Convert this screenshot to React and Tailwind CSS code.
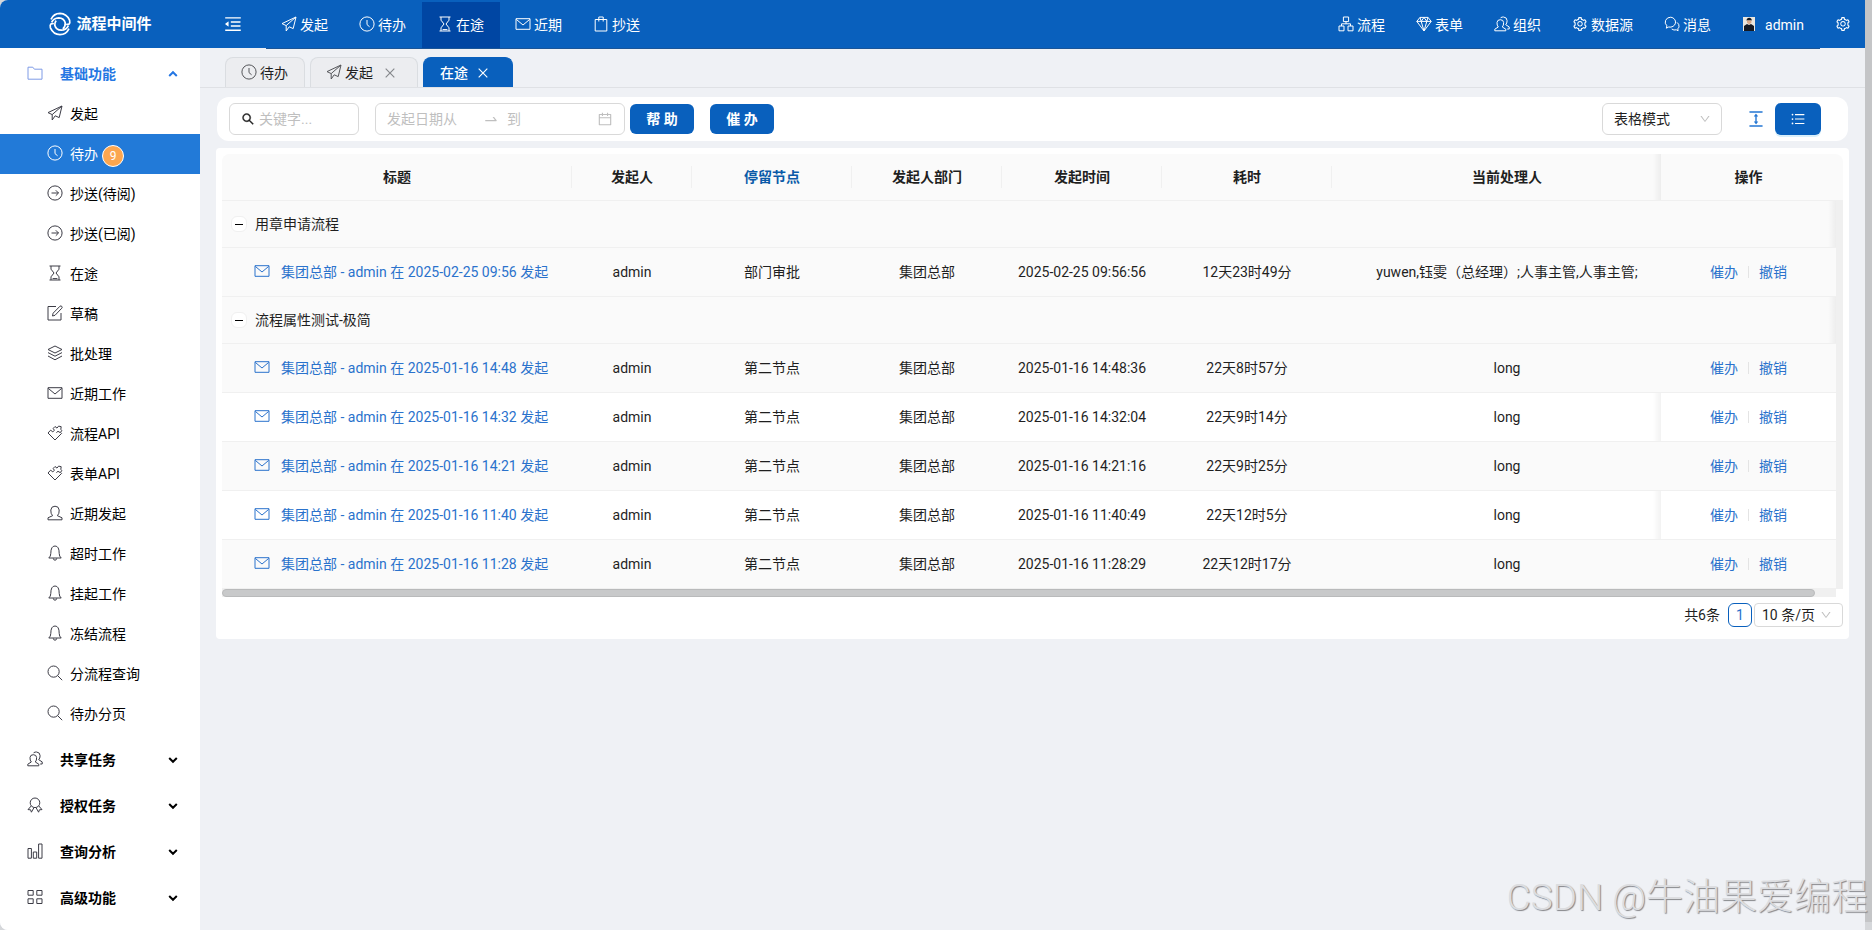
import React, { useState } from "react";
import clsx from "clsx";
import {
  AiOutlineCalendar,
  AiOutlineClose,
  AiOutlineColumnHeight,
  AiOutlineDown,
  AiOutlineMenuFold,
  AiOutlineSearch,
  AiOutlineSetting,
  AiOutlineSwapRight,
  AiOutlineUnorderedList,
} from "react-icons/ai";

// thin 16px line icons, one path each
const paths = {
  send: "M15 1 1 7.6l4.2 2L15 1l-2.8 11.6-4-1.8M5.2 9.6V15l3-4.2",
  clock: "M8 .9a7.1 7.1 0 1 0 0 14.2A7.1 7.1 0 0 0 8 .9M8 4v4.6l2.6 2.2",
  arrow: "M8 .9a7.1 7.1 0 1 0 0 14.2A7.1 7.1 0 0 0 8 .9M4.5 8h7M8.8 5.3 11.5 8l-2.7 2.7",
  hourglass: "M2.5 1h11M2.5 15h11M4 1v3.2L7 8l-3 3.8V15M12 1v3.2L9 8l3 3.8V15M5.6 13.6h4.8",
  edit: "M9 1.5H1v13.5h13V8M5.5 11l.6-2.8L13 1.2q1-.7 1.8.2t0 1.8L8 10.3z",
  layers: "M8 1 15 4.5 8 8 1 4.5zM1 7.6l7 3.6 7-3.6M1 11l7 3.8 7-3.8",
  mail: "M1 2.7h14v10.6H1zM1.3 3.4 8 9l6.7-5.6",
  clip: "M2.2 3.5h11.6V15H2.2zM5.8 5.5V1h4.4v4.5",
  api: "M3.6 5.2 1 8l7 7 6.6-6.6-1-1M3.6 5.2l2.2 1.6 1.6-1.4-1.2-2L8 1.5l2 1.6 1.6-2 2.6.6-.4 2.6 1.2 1.4-2 1.8-2-1.2L9.4 7.6",
  user: "M1 14.8v-2l4.6-2.1Q3.6 8.8 3.8 5 4.2 1.2 8 1.2T12.2 5q.2 3.8-1.8 5.7l4.6 2.1v2z",
  users:
    "M.8 14.8v-1.6L4.3 11Q2.8 9.4 3 6.5q.2-2.8 3.3-2.8t3.3 2.8Q9.8 9.4 8.3 11l3.5 2.2v1.6zM6.6 1.8Q8 .8 9.6 1q3.4.3 3.5 3.7 0 2.6-1.4 4l3.5 2.2V13h-2",
  bell: "M1.8 13h12.4q-2-1.6-2-4.6 0-7.4-4.2-7.4T3.8 8.4q0 3-2 4.6M6.3 13.4q.2 1.8 1.7 1.8t1.7-1.8",
  search: "M6.6 1a5.6 5.6 0 1 0 0 11.2A5.6 5.6 0 0 0 6.6 1M10.7 10.7 15.2 15.2",
  folder: "M1 2.2h4.8l1.6 2H15v10H1z",
  award: "M8 1a4.8 4.8 0 1 0 0 9.6A4.8 4.8 0 0 0 8 1M4.2 9 1 12.6l2.6.2.8 2.4L7 10.6M11.8 9l3.2 3.6-2.6.2-.8 2.4L9 10.6",
  chart: "M1 5.5h3.4v9.7H1zM6.3 9h3.4v6.2H6.3zM11.6 1H15v14.2h-3.4z",
  grid: "M1 1.5h5.2v4.7H1zM9.8 1.5H15v4.7H9.8zM1 9.8h5.2v4.7H1zM9.8 9.8H15v4.7H9.8z",
  flow: "M5.4 1h5.2v4.6H5.4zM1 10h5v4.8H1zM10 10h5v4.8h-5zM8 5.6v2.2M3.5 10V7.8h9V10",
  diamond: "M4 1.4h8l3.2 4L8 15 .8 5.4zM.8 5.4h14.4M4 1.4l1.2 4L8 15l2.8-9.6 1.2-4M5.2 5.4 8 1.4l2.8 4",
  chat: "M6.8 1.2a5.5 5 0 0 0-3.9 8.6l-.6 2.4 2.4-1.2A5.5 5 0 1 0 6.8 1.2M13 6.4q2.4 1.6 2 4.4-.3 1.2-1.2 2l.3 2-1.8-1q-2.4.8-4.6-.8",
};

function Icon({ name, className }) {
  return (
    <svg
      viewBox="1 1 14 14"
      className={clsx("mb-0.5 size-[14px] shrink-0 overflow-visible", className)}
      fill="none"
      stroke="currentColor"
      strokeLinejoin="round"
      aria-hidden="true"
    >
      <path d={paths[name]} />
    </svg>
  );
}

const leftNav = [
  { icon: "send", label: "发起" },
  { icon: "clock", label: "待办" },
  { icon: "hourglass", label: "在途" },
  { icon: "mail", label: "近期" },
  { icon: "clip", label: "抄送" },
];

const rightNav = [
  { icon: "flow", label: "流程" },
  { icon: "diamond", label: "表单" },
  { icon: "users", label: "组织" },
  { icon: "gear", label: "数据源" },
  { icon: "chat", label: "消息" },
];

const sideItems = [
  { icon: "send", label: "发起" },
  { icon: "clock", label: "待办", badge: 9 },
  { icon: "arrow", label: "抄送(待阅)" },
  { icon: "arrow", label: "抄送(已阅)" },
  { icon: "hourglass", label: "在途" },
  { icon: "edit", label: "草稿" },
  { icon: "layers", label: "批处理" },
  { icon: "mail", label: "近期工作" },
  { icon: "api", label: "流程API" },
  { icon: "api", label: "表单API" },
  { icon: "user", label: "近期发起" },
  { icon: "bell", label: "超时工作" },
  { icon: "bell", label: "挂起工作" },
  { icon: "bell", label: "冻结流程" },
  { icon: "search", label: "分流程查询" },
  { icon: "search", label: "待办分页" },
];

const sideGroups = [
  { icon: "users", label: "共享任务" },
  { icon: "award", label: "授权任务" },
  { icon: "chart", label: "查询分析" },
  { icon: "grid", label: "高级功能" },
];

const columns = ["标题", "发起人", "停留节点", "发起人部门", "发起时间", "耗时", "当前处理人"];

const groups = [
  {
    name: "用章申请流程",
    rows: [
      {
        time: "2025-02-25 09:56:56",
        node: "部门审批",
        cost: "12天23时49分",
        handler: "yuwen,钰雯（总经理）;人事主管,人事主管;",
      },
    ],
  },
  {
    name: "流程属性测试-极简",
    rows: [
      { time: "2025-01-16 14:48:36", node: "第二节点", cost: "22天8时57分", handler: "long" },
      { time: "2025-01-16 14:32:04", node: "第二节点", cost: "22天9时14分", handler: "long" },
      { time: "2025-01-16 14:21:16", node: "第二节点", cost: "22天9时25分", handler: "long" },
      { time: "2025-01-16 11:40:49", node: "第二节点", cost: "22天12时5分", handler: "long" },
      { time: "2025-01-16 11:28:29", node: "第二节点", cost: "22天12时17分", handler: "long" },
    ],
  },
];

function NavLink({ icon, label, active }) {
  return (
    <a
      href="#"
      className={clsx("mt-0.5 flex items-center gap-1 px-4 whitespace-nowrap", active && "bg-[#0046a3]")}
    >
      {icon === "gear" ? (
        <AiOutlineSetting className="-mx-px mb-0.5 size-4" />
      ) : (
        <Icon name={icon} />
      )}
      <span>{label}</span>
    </a>
  );
}

function Header() {
  return (
    <header className="flex h-12 bg-[#0960bd] text-white">
      <a href="#" className="flex w-[200px] shrink-0 items-center justify-center gap-1">
        <svg viewBox="0 0 24 24" className="size-6" fill="none" stroke="currentColor" strokeWidth="1.7" aria-hidden="true">
          <path d="M3 7.4Q5.8 1.4 12 1.4q6.6.2 9.6 6.8.6 2.6-.4 3.6t-3 .4" />
          <path d="M21 16.6q-2.8 6-9 6-6.6-.2-9.6-6.8-.6-2.6.4-3.6t3-.4" />
          <path d="M3.6 10.4Q5.6 6 10.8 5.8q5.2.2 6.4 5 .4 3.6-2.4 6M20.4 13.6q-2 4.4-7.2 4.6-5.2-.2-6.4-5-.2-3 1.4-4.6" />
        </svg>
        <span className="mt-0.5 text-[15px] font-bold">流程中间件</span>
      </a>
      <button aria-label="折叠菜单" className="w-[66px] shrink-0 pl-[23px]">
        <AiOutlineMenuFold className="size-5" />
      </button>
      <div className="flex h-[49px] min-w-0 flex-1 border-b border-[#1a5598] bg-[#0960bd]">
        <nav className="flex flex-1">
          {leftNav.map((item) => (
            <NavLink key={item.label} {...item} active={item.label === "在途"} />
          ))}
        </nav>
        <nav className="flex">
          {rightNav.map((item) => (
            <NavLink key={item.label} {...item} />
          ))}
          <a href="#" className="mt-0.5 flex items-center gap-2.5 px-4">
            <svg viewBox="0 0 12 14" className="mb-0.5 h-[14px] w-3" aria-hidden="true">
              <path fill="#e9e6df" d="M0 0h12v14H0z" />
              <path fill="#141821" d="M1 14V9l3-2 2 1 2-1 3 2v5zM3.5 3.5Q3.8.8 6.2.8T8.8 3.6z" />
              <path fill="#d9a98a" d="M4 3.4h4.4v2.4L6.2 7.6 4 5.8z" />
            </svg>
            <span>admin</span>
          </a>
        </nav>
      </div>
      <button aria-label="设置" className="w-[45px] shrink-0 pl-[15px]">
        <AiOutlineSetting className="size-4" />
      </button>
    </header>
  );
}

function Chevron({ up }) {
  return (
    <svg viewBox="0 0 10 10" className="ml-auto size-2.5" fill="none" stroke="currentColor" strokeWidth="2" aria-hidden="true">
      <path d={up ? "M1.2 7 5 3.2 8.8 7" : "M1.2 3 5 6.8 8.8 3"} />
    </svg>
  );
}

function Sidebar() {
  const [active, setActive] = useState("待办");

  return (
    <aside className="w-[200px] shrink-0 bg-white text-black">
      <button className="mt-1.5 flex h-10 w-full items-center pr-[22px] pl-7 font-bold text-[#2577e3]">
        <Icon name="folder" className="mr-[18px] text-[#7f9be6]" />
        基础功能
        <Chevron up />
      </button>
      {sideItems.map(({ icon, label, badge }) => (
        <a
          key={label}
          href="#"
          onClick={() => setActive(label)}
          className={clsx("flex h-10 items-center pl-12", active === label && "bg-[#227ad8] text-white")}
        >
          <Icon name={icon} className={clsx("mr-2", active !== label && "text-[#3c3c46]")} />
          {label}
          {badge && (
            <span className="mt-1 ml-1 flex size-[22px] items-center justify-center rounded-full border border-white bg-[#fba650] text-xs text-white">
              {badge}
            </span>
          )}
        </a>
      ))}
      {sideGroups.map(({ icon, label }) => (
        <button key={label} className="mt-1.5 flex h-10 w-full items-center pr-[22px] pl-7 font-bold">
          <Icon name={icon} className="mr-[18px] text-[#3c3c46]" />
          {label}
          <Chevron />
        </button>
      ))}
    </aside>
  );
}

function PageTabs() {
  const tab = "flex h-[30px] items-center rounded-t-lg border border-b-0 px-4";
  return (
    <div className="flex h-10 items-end gap-[5px] border-b border-[#dfe1e5] pl-[25px]">
      <button className={clsx(tab, "gap-1 border-[#dadde1] bg-[#ecedf0]")}>
        <Icon name="clock" className="text-[#55565a]" /> 待办
      </button>
      <button className={clsx(tab, "gap-1 border-[#dadde1] bg-[#ecedf0]")}>
        <Icon name="send" className="text-[#55565a]" /> 发起
        <AiOutlineClose className="mr-1 ml-1.5 size-[14px] text-[#85878b]" />
      </button>
      <button className={clsx(tab, "gap-2 border-[#0960bd] bg-[#0960bd] font-medium text-white")}>
        在途 <AiOutlineClose className="mr-1.5 size-[14px]" />
      </button>
    </div>
  );
}

function Toolbar() {
  const box = "flex h-8 items-center rounded-md border border-[#d9d9d9] bg-white px-[11px]";
  const primary = "h-[30px] w-16 rounded-md bg-[#0960bd] font-bold text-white";
  return (
    <div className="mx-[17px] mt-[9px] flex h-11 items-center rounded-xl bg-white pr-[27px] pl-3">
      <label className={clsx(box, "mr-4 w-[130px] gap-1")}>
        <AiOutlineSearch className="size-[14px] shrink-0 stroke-[30]" />
        <input placeholder="关键字..." aria-label="关键字" className="w-full min-w-0 outline-none placeholder:text-[#bfbfbf]" />
      </label>
      <div className={clsx(box, "w-[250px]")}>
        <input placeholder="发起日期从" aria-label="发起日期从" className="w-24 outline-none placeholder:text-[#bfbfbf]" />
        <AiOutlineSwapRight className="mr-2 size-4 shrink-0 text-[#bfbfbf]" />
        <input placeholder="到" aria-label="到" className="w-full min-w-0 outline-none placeholder:text-[#bfbfbf]" />
        <AiOutlineCalendar className="size-4 shrink-0 text-[#bfbfbf]" />
      </div>
      <button className={clsx(primary, "ml-[5px]")}>帮 助</button>
      <button className={clsx(primary, "ml-4")}>催 办</button>
      <div className="relative ml-auto">
        <select aria-label="显示模式" className="h-8 w-[120px] appearance-none rounded-md border border-[#d9d9d9] px-[11px]">
          <option>表格模式</option>
        </select>
        <AiOutlineDown className="pointer-events-none absolute top-2.5 right-[11px] size-3 text-[#bfbfbf]" />
      </div>
      <button aria-label="行高" className="ml-6 text-[#2577d3]">
        <AiOutlineColumnHeight className="size-5" />
      </button>
      <button
        aria-label="列表"
        className="ml-[9px] flex h-8 w-[46px] items-center justify-center rounded-md bg-[#0960bd] text-white shadow-[0_2px_0_#d8effb]"
      >
        <AiOutlineUnorderedList className="size-4" />
      </button>
    </div>
  );
}

// soft edge drawn on the left of the pinned column
const edge =
  "before:absolute before:inset-y-0 before:-left-2 before:w-2 before:bg-linear-to-r before:from-transparent before:to-black/5";

function FlowTable() {
  return (
    <div className="flex rounded-t-lg bg-[#fafafa]">
      <div className="min-w-0 flex-1 overflow-hidden rounded-tl-lg">
        <table className="w-full min-w-[1635px] table-fixed border-separate border-spacing-0 text-center">
          <colgroup>
            <col className="w-[350px]" />
            <col className="w-[120px]" />
            <col className="w-[160px]" />
            <col className="w-[150px]" />
            <col className="w-[160px]" />
            <col className="w-[170px]" />
            <col className="w-[350px]" />
            <col className="w-[175px]" />
          </colgroup>
          <thead>
            <tr className="h-[47px] bg-[#fafafa]">
              {columns.map((name, i) => (
                <th
                  key={name}
                  className={clsx(
                    "relative border-b border-[#f0f0f0] font-bold",
                    name === "停留节点" && "text-[#0b5aa8]",
                    i < 6 && "after:absolute after:top-3 after:right-0 after:h-[22px] after:w-px after:bg-[#f0f0f0]"
                  )}
                >
                  {name}
                </th>
              ))}
              <th className={clsx("sticky right-0 border-b border-[#f0f0f0] bg-[#fafafa] font-bold", edge)}>操作</th>
            </tr>
          </thead>
          <tbody>
            {groups.map((group) => (
              <React.Fragment key={group.name}>
                <tr className="h-[47px] bg-[#fafafa]">
                  <td colSpan={7} className="border-b border-[#f0f0f0] pl-[9px] text-left">
                    <div className="flex items-center gap-2">
                      <button
                        aria-label="收起"
                        className="flex size-4 items-center justify-center rounded-md border border-[#f0f0f0] bg-white"
                      >
                        <span className="h-px w-2 bg-black" />
                      </button>
                      {group.name}
                    </div>
                  </td>
                  <td className="sticky right-0 border-b border-[#f0f0f0] bg-[#fafafa] after:absolute after:inset-y-0 after:right-0 after:w-2 after:bg-linear-to-r after:from-transparent after:to-black/5" />
                </tr>
                {group.rows.map((row, i) => (
                  <tr key={row.time} className={clsx("h-[49px]", i % 2 ? "bg-white" : "bg-[#fafafa]")}>
                    <td className="border-b border-[#f0f0f0] pl-[33px] text-left">
                      <a href="#" className="flex items-center gap-3 text-[#2a72cc]">
                        <Icon name="mail" />
                        集团总部 - admin 在 {row.time.slice(0, 16)} 发起
                      </a>
                    </td>
                    <td className="border-b border-[#f0f0f0]">admin</td>
                    <td className="border-b border-[#f0f0f0]">{row.node}</td>
                    <td className="border-b border-[#f0f0f0]">集团总部</td>
                    <td className="border-b border-[#f0f0f0]">{row.time}</td>
                    <td className="border-b border-[#f0f0f0]">{row.cost}</td>
                    <td className="border-b border-[#f0f0f0]">{row.handler}</td>
                    <td
                      className={clsx(
                        "sticky right-0 border-b border-[#f0f0f0]",
                        i % 2 ? clsx("bg-white", edge) : "bg-[#fafafa]"
                      )}
                    >
                      <div className="flex items-center justify-center text-[#2a72cc]">
                        <button>催办</button>
                        <span className="mx-2.5 h-3 w-px bg-[#e4e4e4]" />
                        <button>撤销</button>
                      </div>
                    </td>
                  </tr>
                ))}
              </React.Fragment>
            ))}
          </tbody>
        </table>
        <div className="h-2 bg-[#f0f0f0] pr-[21px]">
          <div className="h-2 rounded-sm border border-[#b9babb] bg-[#c8c9ca]" />
        </div>
      </div>
      <div className="mt-[46px] w-[7px] border-b-8 border-white bg-[#f0f0f0]" />
    </div>
  );
}

function Pagination() {
  return (
    <div className="mt-1.5 flex h-6 items-center justify-end">
      <span className="mr-2">共6条</span>
      <button className="mr-0.5 size-6 rounded-md border border-[#0960bd] text-[#2a72cc]">1</button>
      <div className="relative">
        <select aria-label="每页条数" className="h-6 w-[89px] appearance-none rounded border border-[#d9d9d9] pl-[7px]">
          <option>10 条/页</option>
        </select>
        <AiOutlineDown className="pointer-events-none absolute top-1.5 right-[11px] size-3 text-[#bfbfbf]" />
      </div>
    </div>
  );
}

export default function App() {
  return (
    <div className="relative flex min-h-screen bg-[#d5d7da] font-[Roboto,'Noto_Sans_CJK_SC',sans-serif] text-sm text-[#1f1f1f]">
      <div className="flex min-w-0 flex-1 flex-col overflow-hidden rounded-l-lg bg-[#eff1f5]">
        <Header />
        <div className="flex flex-1">
          <Sidebar />
          <main className="min-w-0 flex-1">
            <PageTabs />
            <Toolbar />
            <div className="mx-4 mt-[7px] rounded-sm bg-white px-1.5 pt-1.5 pb-3">
              <FlowTable />
              <Pagination />
            </div>
          </main>
        </div>
      </div>
      <div className="mb-2 w-[7px] bg-[#c4c5c7]" />
      <p className="pointer-events-none absolute right-1 bottom-1.5 text-[37px] leading-[52px] font-light text-[#dcdde0] [text-shadow:1px_1px_1px_#85868a]">
        CSDN @牛油果爱编程
      </p>
    </div>
  );
}
